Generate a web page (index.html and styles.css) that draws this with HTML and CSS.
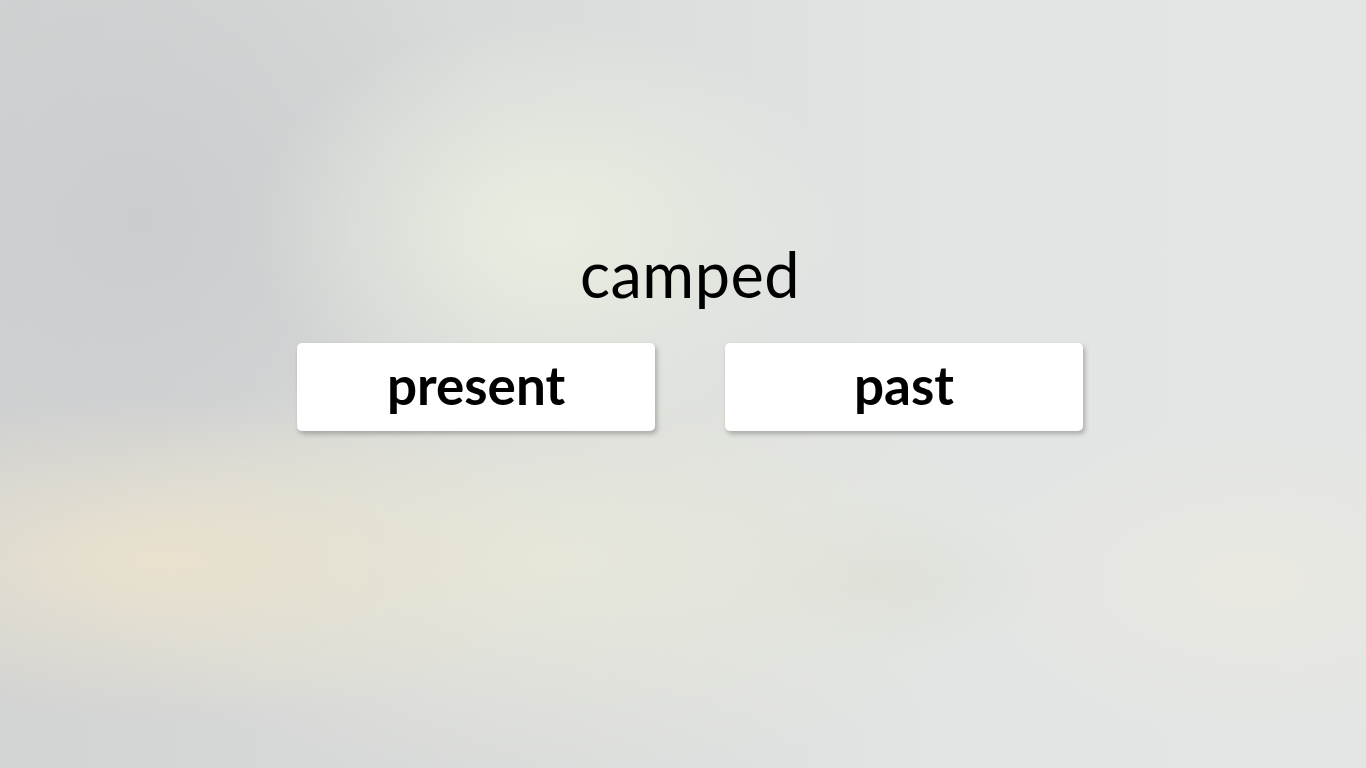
FILE: index.html
```html
<!DOCTYPE html>
<html lang="en">

<head>
    <meta charset="UTF-8">
    <meta name="viewport" content="width=device-width, initial-scale=1.0">
    <title>Tense Quiz</title>
    <link rel="stylesheet" href="styles.css">
</head>

<body>
    <div class="quiz">
        <!-- Word to classify -->
        <div class="word">camped</div>

        <!-- Answer choices -->
        <div class="choices">
            <button class="choice">present</button>
            <button class="choice">past</button>
        </div>
    </div>
</body>

</html>
```

FILE: styles.css
```css
html,
body {
    height: 100%;
}

body {
    margin: 0;
    font-family: "Lato", "Open Sans", sans-serif;
    color: #000;
    background-color: #dcdedd;
    background-image:
        radial-gradient(ellipse 300px 210px at 550px 230px, rgba(234, 239, 224, 0.95), rgba(234, 239, 224, 0)),
        radial-gradient(ellipse 420px 160px at 160px 560px, rgba(234, 226, 206, 0.95), rgba(234, 226, 206, 0)),
        radial-gradient(ellipse 500px 220px at 560px 560px, rgba(232, 232, 218, 0.9), rgba(232, 232, 218, 0)),
        radial-gradient(ellipse 160px 80px at 880px 580px, rgba(218, 220, 214, 0.8), rgba(218, 220, 214, 0)),
        radial-gradient(ellipse 300px 160px at 1250px 580px, rgba(234, 232, 224, 0.9), rgba(234, 232, 224, 0)),
        radial-gradient(ellipse 380px 380px at 140px 220px, rgba(202, 204, 206, 0.95), rgba(202, 204, 206, 0)),
        linear-gradient(90deg, #d2d3d3 0%, #dadcdb 40%, #e2e5e4 70%, #e3e6e5 100%);
}

.quiz {
    padding-top: 236px;
    padding-left: 14px;
    display: flex;
    flex-direction: column;
    align-items: center;
}

.word {
    font-size: 63px;
    line-height: 76px;
    letter-spacing: 0.5px;
}

.choices {
    display: flex;
    gap: 70px;
    margin-top: 31px;
}

.choice {
    width: 358px;
    height: 88px;
    border: none;
    border-radius: 5px;
    background: #fff;
    box-shadow: 2px 3px 5px rgba(0, 0, 0, 0.25);
    font-family: inherit;
    font-size: 53px;
    font-weight: bold;
    color: #000;
    padding: 0 0 6px;
    cursor: pointer;
}
```
